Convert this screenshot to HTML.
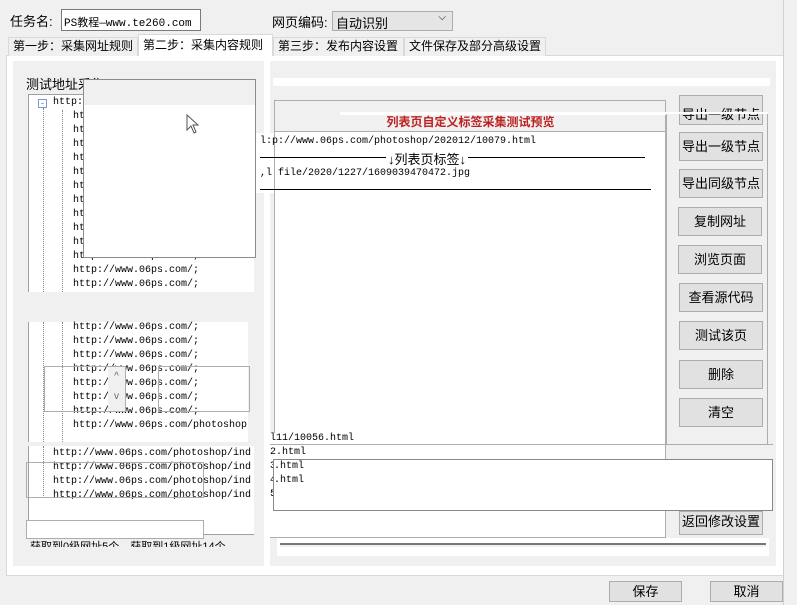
<!DOCTYPE html>
<html><head><meta charset="utf-8"><style>
*{margin:0;padding:0;box-sizing:border-box}
body{width:797px;height:605px;background:#f0f0f0;position:relative;overflow:hidden;font-family:"Liberation Sans","Noto Sans CJK SC",sans-serif;font-size:12px;color:#000}
.a{position:absolute}
.m{font-family:"Liberation Mono","Noto Sans CJK SC",monospace;font-size:10px;white-space:nowrap}
.btn{position:absolute;width:84px;height:29px;background:#e1e1e1;border:1px solid #adadad;text-align:center;line-height:27px;font-size:13px;white-space:nowrap}
.tab{position:absolute;top:37px;height:19px;border:1px solid #d9d9d9;border-bottom:none;background:#f0f0f0;font-size:12px;line-height:17px;padding-left:4px;white-space:nowrap;overflow:hidden}
.t{position:absolute;left:73px;line-height:14px}
</style></head><body>
<div class="a" style="left:10px;top:11px;font-size:13px">任务名:</div>
<div class="a m" style="left:61px;top:9px;width:140px;height:22px;border:1px solid #7a7a7a;background:#fff;padding:4px 2px;font-size:11px">PS教程—www.te260.com</div>
<div class="a" style="left:272px;top:12px;font-size:13px">网页编码:</div>
<div class="a" style="left:332px;top:11px;width:121px;height:20px;border:1px solid #adadad;background:#e5e5e5;font-size:13px;padding:1px 3px">自动识别<span style="position:absolute;right:6px;top:0;font-size:10px">⌵</span></div>
<!-- panel -->
<div class="a" style="left:6px;top:55px;width:778px;height:521px;background:#fff;border:1px solid #d9d9d9"></div>
<div class="tab" style="left:8px;width:130px">第一步：采集网址规则</div>
<div class="tab" style="left:138px;top:34px;height:22px;width:135px;background:#fff;line-height:20px">第二步：采集内容规则</div>
<div class="tab" style="left:273px;width:131px">第三步：发布内容设置</div>
<div class="tab" style="left:404px;width:142px">文件保存及部分高级设置</div>
<!-- left group -->
<div class="a" style="left:13px;top:61px;width:251px;height:505px;background:#f0f0f0"></div>
<div class="a" style="left:26px;top:74px;font-size:13px">测试地址采集</div>
<div class="a" style="left:28px;top:94px;width:226px;height:198px;background:#fff;border:1px solid #a0a0a0;border-right:none;border-bottom:none"></div>
<div class="a" style="left:43px;top:108px;height:184px;border-left:1px dotted #888"></div>
<div class="a" style="left:62px;top:110px;height:182px;border-left:1px dotted #888"></div>
<div class="a" style="left:38px;top:99px;width:9px;height:9px;border:1px solid #7a9ccc;background:#fff;font-size:9px;line-height:6px;text-align:center;color:#36c">-</div>
<div class="a m" style="left:53px;top:97px">http://www.06ps.com/pho</div>
<div class="a m t" style="top:110px">htt<br>htt<br>htt<br>htt<br>htt<br>htt<br>htt<br>htt<br>htt<br>htt<br>http://www.06ps.com/;<br>http://www.06ps.com/;<br>http://www.06ps.com/;</div>
<div class="a" style="left:28px;top:322px;width:220px;height:120px;background:#fff;border-left:1px solid #a0a0a0"></div>
<div class="a" style="left:43px;top:322px;height:120px;border-left:1px dotted #888"></div>
<div class="a" style="left:62px;top:322px;height:120px;border-left:1px dotted #888"></div>
<div class="a m t" style="top:321px">http://www.06ps.com/;<br>http://www.06ps.com/;<br>http://www.06ps.com/;<br>http://www.06ps.com/;<br>http://www.06ps.com/;<br>http://www.06ps.com/;<br>http://www.06ps.com/;<br>http://www.06ps.com/photoshop</div>
<div class="a" style="left:44px;top:366px;width:82px;height:46px;border:1px solid #adadad"></div>
<div class="a" style="left:108px;top:367px;width:17px;height:44px;background:#f0f0f0;text-align:center;font-size:10px;line-height:20px;color:#666">^<br>v</div>
<div class="a" style="left:158px;top:366px;width:92px;height:46px;border:1px solid #adadad"></div>
<div class="a" style="left:28px;top:446px;width:226px;height:89px;background:#fff;border-left:1px solid #a0a0a0;border-bottom:1px solid #a0a0a0"></div>
<div class="a" style="left:43px;top:446px;height:50px;border-left:1px dotted #888"></div>
<div class="a m" style="left:53px;top:447px;line-height:14px">http://www.06ps.com/photoshop/ind<br>http://www.06ps.com/photoshop/ind<br>http://www.06ps.com/photoshop/ind<br>http://www.06ps.com/photoshop/ind</div>
<div class="a" style="left:26px;top:462px;width:178px;height:36px;border:1px solid #adadad"></div>
<div class="a" style="left:26px;top:520px;width:178px;height:19px;border:1px solid #adadad;background:#fff"></div>
<div class="a" style="left:30px;top:540px;font-size:11px;height:7px;overflow:hidden;line-height:14px">获取到0级网址5个，获取到1级网址14个</div>
<!-- popup -->
<div class="a" style="left:83px;top:79px;width:173px;height:179px;border:1px solid #8a8a96;background:#fff"></div>
<div class="a" style="left:84px;top:80px;width:171px;height:25px;background:#f0f0f0"></div>
<svg class="a" style="left:186px;top:114px" width="14" height="20" viewBox="0 0 14 20"><path d="M1 1 L1 16 L5 12 L8 19 L10 18 L7 11 L12 11 Z" fill="#fff" stroke="#555"/></svg>
<!-- right group -->
<div class="a" style="left:270px;top:61px;width:506px;height:505px;background:#f0f0f0"></div>
<div class="a" style="left:273px;top:78px;width:497px;height:8px;background:#fff"></div>
<div class="a" style="left:274px;top:100px;width:392px;height:334px;background:#fff;border:1px solid #adadad"></div>
<div class="a" style="left:275px;top:101px;width:390px;height:31px;background:#f0f0f0;border-bottom:1px solid #adadad"></div>
<div class="a" style="left:276px;top:113px;width:389px;text-align:center;color:#b22;font-weight:bold;font-size:12px">列表页自定义标签采集测试预览</div>
<div class="a" style="left:340px;top:112px;width:427px;height:3px;background:#fff"></div>
<div class="a" style="left:256px;top:133px;width:18px;height:60px;background:#fff"></div>
<div class="a m" style="left:260px;top:136px">l:p://www.06ps.com/photoshop/202012/10079.html</div>
<div class="a" style="left:260px;top:157px;width:385px;border-top:1px solid #000"></div>
<div class="a" style="left:386px;top:149px;background:#fff;padding:0 2px;font-size:13px">↓列表页标签↓</div>
<div class="a m" style="left:260px;top:168px">,l file/2020/1227/1609039470472.jpg</div>
<div class="a" style="left:260px;top:189px;width:391px;border-top:1px solid #000"></div>
<div class="a" style="left:666px;top:112px;width:102px;height:333px;border:1px solid #adadad;background:#f0f0f0"></div>
<div class="btn" style="left:679px;top:95px;height:30px;overflow:hidden;line-height:38px">导出一级节点</div>
<div class="a" style="left:666px;top:112px;width:102px;height:2px;background:#fff"></div>
<div class="btn" style="left:679px;top:132px">导出一级节点</div>
<div class="btn" style="left:679px;top:169px">导出同级节点</div>
<div class="btn" style="left:678px;top:207px">复制网址</div>
<div class="btn" style="left:678px;top:245px">浏览页面</div>
<div class="btn" style="left:679px;top:283px">查看源代码</div>
<div class="btn" style="left:679px;top:321px">测试该页</div>
<div class="btn" style="left:679px;top:360px">删除</div>
<div class="btn" style="left:679px;top:398px">清空</div>
<div class="a" style="left:270px;top:433px;width:396px;height:105px;background:#fff;border-right:1px solid #adadad;border-bottom:1px solid #adadad"></div>
<div class="a m" style="left:270px;top:432px;line-height:14px">l11/10056.html<br>2.html<br>3.html<br>4.html<br>5</div>
<div class="a" style="left:270px;top:444px;width:503px;height:1px;background:#adadad"></div>
<div class="a" style="left:666px;top:445px;width:106px;height:30px;background:#f0f0f0"></div>
<div class="a" style="left:273px;top:459px;width:500px;height:52px;border:1px solid #888;background:#fff"></div>
<div class="a m" style="left:274px;top:460px;line-height:14px">.html<br>.html</div>
<div class="btn" style="left:679px;top:511px;height:24px;line-height:20px;overflow:hidden">返回修改设置</div>
<div class="a" style="left:277px;top:538px;width:492px;height:18px;background:#fff"></div>
<div class="a" style="left:280px;top:543px;width:486px;height:4px;border-top:2px solid #777;background:#f0f0f0"></div>
<div class="btn" style="left:609px;top:581px;width:73px;height:21px;line-height:19px">保存</div>
<div class="btn" style="left:710px;top:581px;width:73px;height:21px;line-height:19px">取消</div>
<div class="a" style="left:783px;top:0;width:1px;height:605px;background:#d0d0d0"></div>
</body></html>
